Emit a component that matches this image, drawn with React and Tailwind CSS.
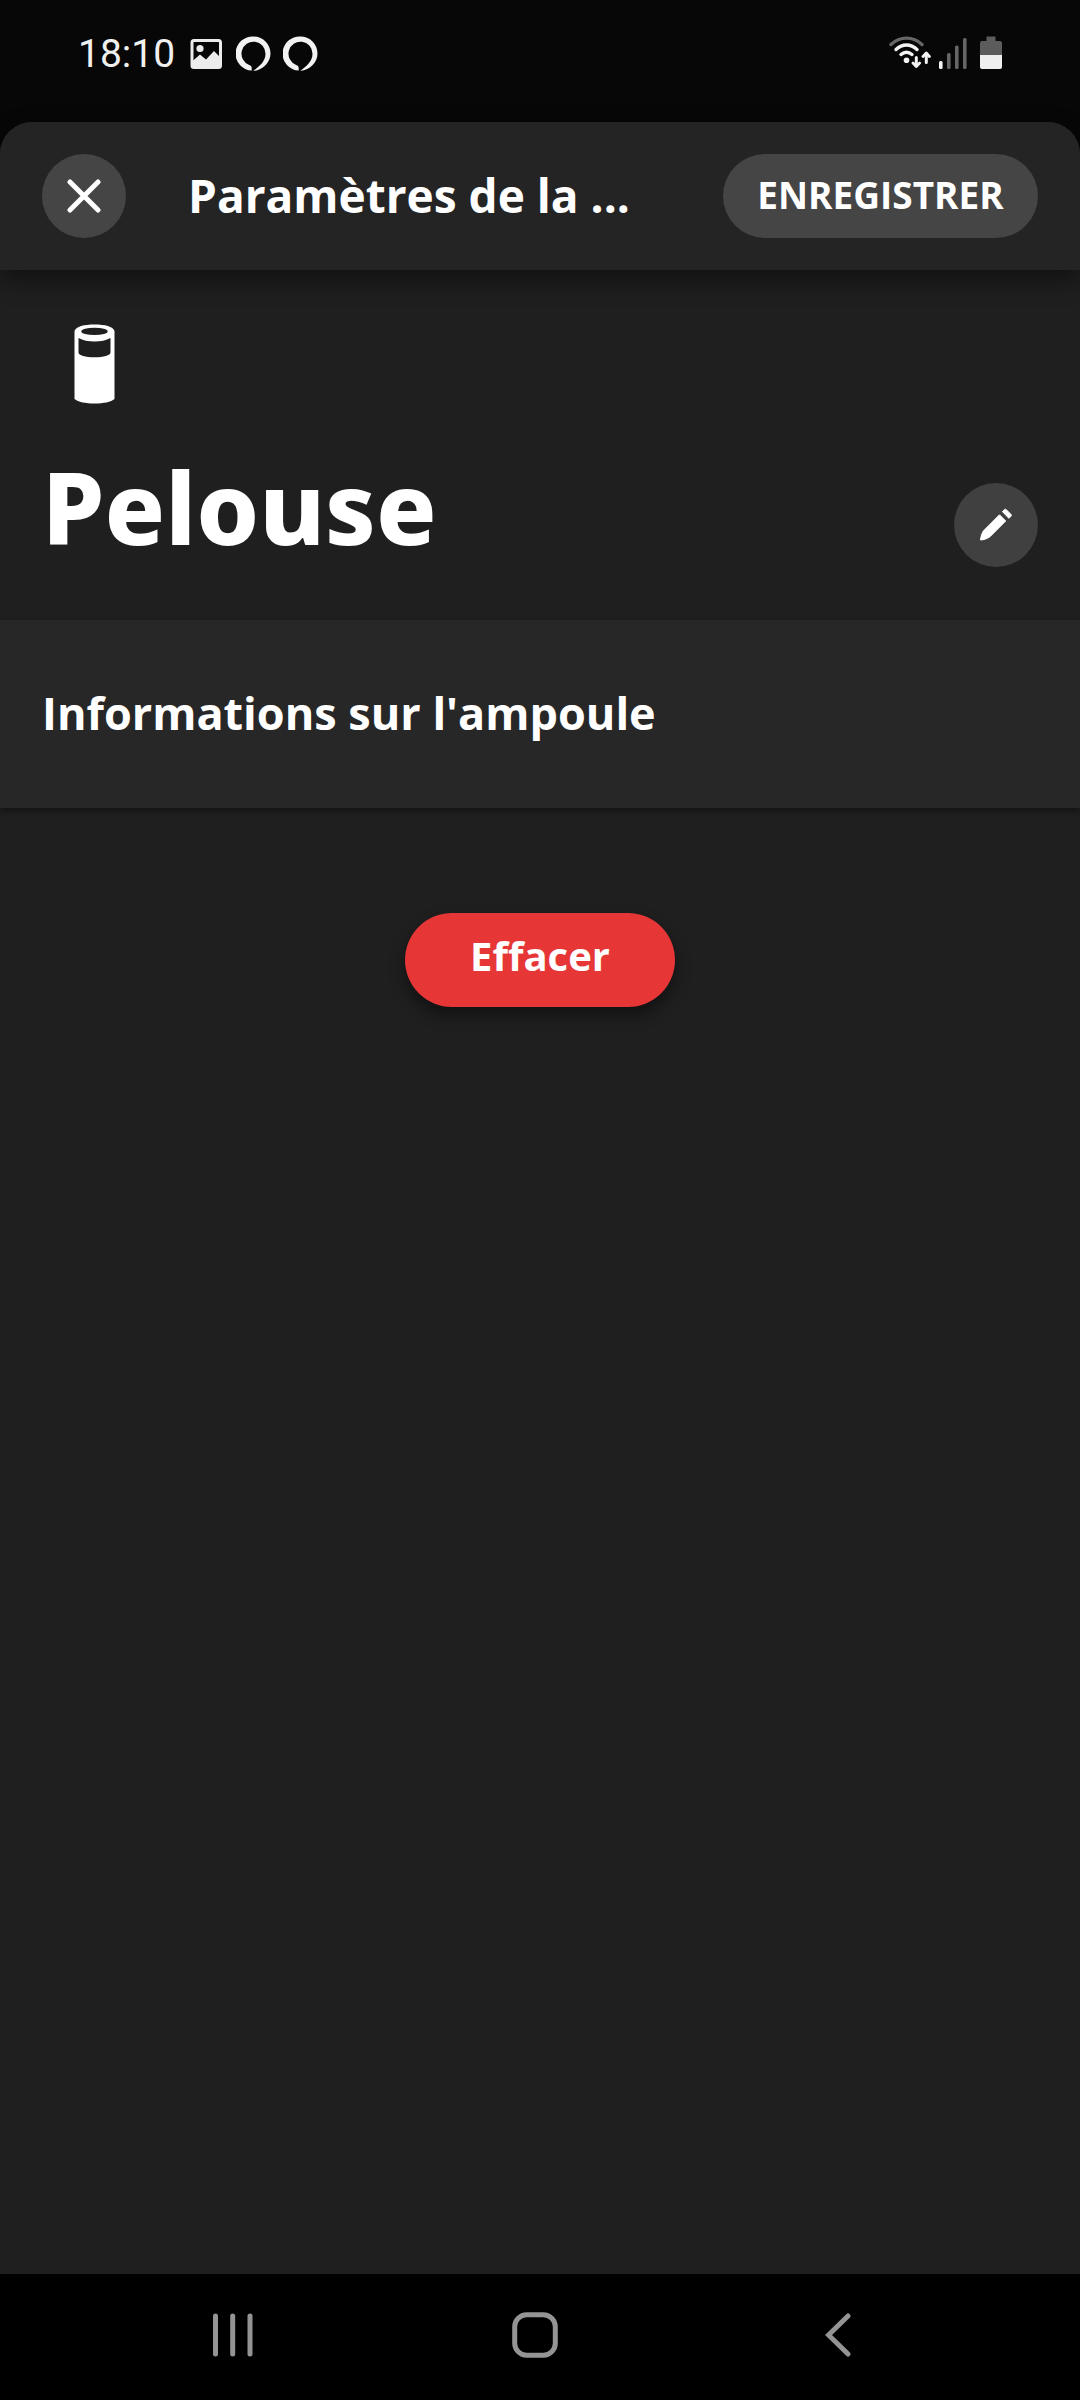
import { useState } from 'react';

function PictureIcon() {
  return (
    <svg width="32" height="30" viewBox="0 0 32 30" fill="none" aria-hidden="true">
      <rect x="2" y="1.5" width="28.5" height="27" rx="2" stroke="#ececec" strokeWidth="3" />
      <circle cx="10" cy="9.5" r="3.6" fill="#ececec" />
      <path d="M2 22.5 L10 15.5 L16 20.5 L24 12 L31 19 V28.5 H2 Z" fill="#ececec" />
    </svg>
  );
}

function AssistantRing() {
  return (
    <svg width="35" height="36" viewBox="0 0 35 36" aria-hidden="true">
      <path
        d="M17.5 0.5 A17 17 0 0 1 34.5 17.5 C34.5 26 27.5 34 17.3 35 C22.8 30.5 29.5 26 29.5 17.8 A12 12 0 1 0 13.2 28.9 C15 29.5 15.7 30.5 15.7 32 V34.6 A17 17 0 0 1 17.5 0.5 Z"
        fill="#f2f2f2"
      />
    </svg>
  );
}

function WifiIcon() {
  return (
    <svg width="42" height="34" viewBox="0 0 42 34" fill="none" strokeLinecap="round" aria-hidden="true">
      <path d="M2 8.5 C11 0 24 0 33 8.5" stroke="#666" strokeWidth="3.4" />
      <path d="M7 13.5 C13.5 7.5 21.5 7.5 28 13.5" stroke="#f4f4f4" strokeWidth="3.4" />
      <path d="M12 18.5 C15.5 15.5 19.5 15.5 23 18.5" stroke="#f4f4f4" strokeWidth="3.4" />
      <circle cx="17.5" cy="24.2" r="2.8" fill="#f4f4f4" />
      <path d="M27.3 21.5 V29 M37.3 26.5 V19" stroke="#f4f4f4" strokeWidth="3" />
      <path d="M24 27 L27.3 30.5 L30.6 27 M34 20.5 L37.3 17 L40.4 20.5" stroke="#f4f4f4" strokeWidth="2.8" strokeLinejoin="round" />
    </svg>
  );
}

function SignalIcon() {
  return (
    <svg width="28" height="34" viewBox="0 0 28 34" aria-hidden="true">
      <rect x="0" y="25" width="3.6" height="8" rx="1.5" fill="#f4f4f4" />
      <rect x="8" y="17" width="3.6" height="16" rx="1.5" fill="#666" />
      <rect x="16" y="9.5" width="3.6" height="23.5" rx="1.5" fill="#666" />
      <rect x="24" y="2" width="3.6" height="31" rx="1.5" fill="#666" />
    </svg>
  );
}

function BatteryIcon() {
  return (
    <svg width="22" height="34" viewBox="0 0 22 34" aria-hidden="true">
      <path d="M6.5 0.5 H15.5 V5 H20 Q22 5 22 7 V19 H0 V7 Q0 5 2 5 H6.5 Z" fill="#5c5c5c" />
      <path d="M0 19 H22 V31 Q22 33 20 33 H2 Q0 33 0 31 Z" fill="#efefef" />
    </svg>
  );
}

function LampIcon() {
  return (
    <svg width="42" height="80" viewBox="0 0 42 80" aria-hidden="true">
      <path d="M0.5 7 C2 2.5 10 0.5 20.5 0.5 C31 0.5 39 2.5 40.5 7 V75 C37 78 29.5 79.5 20.5 79.5 C11.5 79.5 4 78 0.5 75 Z" fill="#fff" />
      <ellipse cx="20.5" cy="7.4" rx="13.2" ry="3.6" fill="#1f1f1f" />
      <path d="M4.5 14 C9 16.4 14 17.5 20.5 17.5 C27 17.5 32 16.4 36.5 14 V28.5 C36.5 31.5 29.5 33.3 20.5 33.3 C11.5 33.3 4.5 31.5 4.5 28.5 Z" fill="#1f1f1f" />
    </svg>
  );
}

function StatusBar() {
  return (
    <div className="flex h-[122px] items-start justify-between bg-[#070707] px-[78px] pt-[32px]">
      <div className="flex h-[44px] items-center">
        <span className="mr-[15px] font-['Roboto',sans-serif] text-[39px] leading-[44px] text-[#f0f0f0]">18:10</span>
        <PictureIcon />
        <span className="ml-[14px] flex gap-[12px]">
          <AssistantRing />
          <AssistantRing />
        </span>
      </div>
      <div className="flex h-[42px] items-center">
        <WifiIcon />
        <span className="ml-[8px] mr-[13px]"><SignalIcon /></span>
        <BatteryIcon />
      </div>
    </div>
  );
}

function NavBar() {
  return (
    <nav className="grid h-[126px] grid-cols-3 bg-black pb-[4px] pl-[82px] pr-[91px]">
      <button aria-label="Applications récentes" className="flex items-center justify-center">
        <svg width="42" height="44" viewBox="0 0 42 44" stroke="#949494" strokeWidth="5" strokeLinecap="round">
          <path d="M3.5 3 V41 M20.7 3 V41 M38 3 V41" />
        </svg>
      </button>
      <button aria-label="Accueil" className="flex items-center justify-center">
        <svg width="46" height="46" viewBox="0 0 46 46" fill="none" stroke="#949494" strokeWidth="5">
          <rect x="2.7" y="2.7" width="40.6" height="40.6" rx="12" />
        </svg>
      </button>
      <button aria-label="Retour" className="flex items-center justify-center">
        <svg width="26" height="44" viewBox="0 0 26 44" fill="none" stroke="#949494" strokeWidth="5" strokeLinecap="round">
          <path d="M23 3 L3.5 22 L23 41" />
        </svg>
      </button>
    </nav>
  );
}

export default function App() {
  const [name] = useState('Pelouse');

  return (
    <div className="flex min-h-screen flex-col bg-[#070707] font-['Open_Sans','Noto_Sans',sans-serif] text-white">
      <StatusBar />

      <main className="flex flex-1 flex-col rounded-t-[32px] bg-[#1f1f1f]">
        <header className="flex h-[148px] items-center rounded-t-[32px] bg-[#242424] px-[42px] shadow-[0_10px_24px_rgba(0,0,0,0.45)]">
          <button aria-label="Fermer" className="flex size-[84px] shrink-0 items-center justify-center rounded-full bg-[#454545]">
            <svg width="34" height="34" viewBox="0 0 34 34" stroke="#fff" strokeWidth="5" strokeLinecap="round">
              <path d="M3 3 L31 31 M31 3 L3 31" />
            </svg>
          </button>
          <h1 className="ml-[62px] flex-1 whitespace-nowrap pb-[2px] text-[46px] font-bold leading-[60px]">Paramètres de la ...</h1>
          <button className="h-[84px] w-[315px] shrink-0 rounded-full bg-[#454545] pb-[2px] text-[37px] font-bold leading-[48px]">
            ENREGISTRER
          </button>
        </header>

        <section className="px-[42px] pb-[53px] pt-[54px]">
          <div className="pl-[32px]">
            <LampIcon />
          </div>
          <div className="mt-[46px] flex items-end justify-between">
            <h2 className="pb-[5px] font-['Noto_Sans',sans-serif] text-[100px] font-extrabold leading-[112px]">{name}</h2>
            <button aria-label="Modifier le nom" className="flex size-[84px] items-center justify-center rounded-full bg-[#404040]">
              <svg width="34" height="34" viewBox="0 0 34 34" fill="#fff" stroke="#fff" strokeWidth="1" strokeLinejoin="round">
                <path d="M20.5 6.8 L26.7 13 L11 28.7 C8 30.8 5 31.8 1.5 32 C1.8 28.5 2.8 25.5 4.5 22.8 Z" />
                <path d="M23.4 3.6 L25.5 1.5 Q26.3 0.8 27.3 1.7 L32 6.4 Q32.8 7.4 32 8.2 L29.9 10.3 Z" />
              </svg>
            </button>
          </div>
        </section>

        <button className="h-[188px] bg-[#272727] px-[42px] pb-[2px] text-left text-[45px] font-bold leading-[60px] shadow-[0_3px_6px_rgba(0,0,0,0.4)]">
          Informations sur l'ampoule
        </button>

        <div className="flex justify-center pt-[105px]">
          <button className="h-[94px] w-[270px] rounded-full bg-[#e63636] pb-[8px] text-[40px] font-bold leading-[52px] shadow-[0_8px_16px_rgba(0,0,0,0.45)]">
            Effacer
          </button>
        </div>
      </main>

      <NavBar />
    </div>
  );
}
